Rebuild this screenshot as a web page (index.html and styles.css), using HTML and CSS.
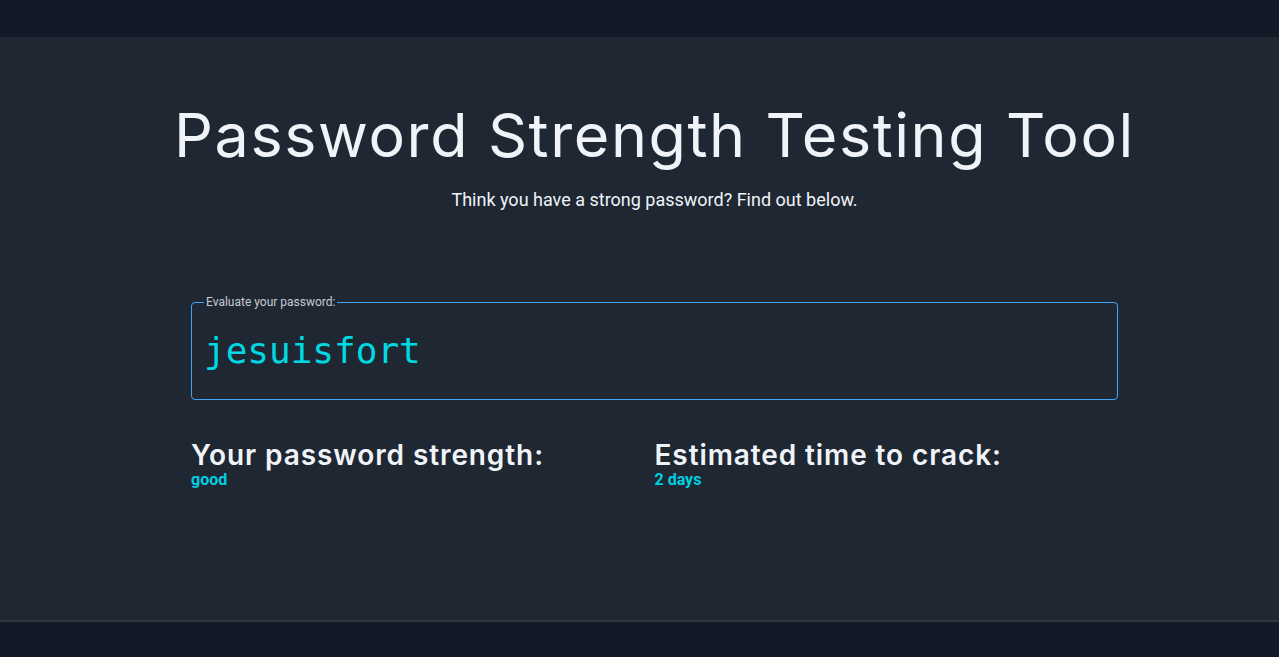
FILE: index.html
```html
<!DOCTYPE html>
<html lang="en">
<head>
<meta charset="utf-8">
<title>Password Strength Testing Tool</title>
<link rel="stylesheet" href="styles.css">
</head>
<body>
<header class="topbar"></header>
<main class="main">
  <div class="container">
    <h1 class="title">Password Strength Testing Tool</h1>
    <p class="subtitle">Think you have a strong password? Find out below.</p>
    <fieldset class="field">
      <legend class="field-label">Evaluate your password:</legend>
      <input class="field-input" type="text" value="jesuisfort" spellcheck="false">
    </fieldset>
    <div class="results">
      <div class="result">
        <h2 class="result-title">Your password strength:</h2>
        <div class="result-value">good</div>
      </div>
      <div class="result">
        <h2 class="result-title">Estimated time to crack:</h2>
        <div class="result-value">2 days</div>
      </div>
    </div>
  </div>
</main>
<footer class="footer"></footer>
</body>
</html>
```
FILE: styles.css
```css
* { box-sizing: border-box; }
html, body { margin: 0; padding: 0; }
body {
  background: #111a26;
  font-family: Roboto, "Liberation Sans", sans-serif;
  color: #f0f4f8;
  height: 657px;
  overflow: hidden;
}
.topbar {
  height: 37px;
  background: #111a26;
}
.main {
  background: #1f2733;
  height: 583px;
  padding-left: 30px;
  padding-top: 56px;
}
.container {
  width: 927px;
  margin: 0 auto;
}
.title {
  margin: 0 -100px;
  text-align: center;
  font-family: Inter, "Open Sans", sans-serif;
  font-weight: 400;
  font-size: 61px;
  line-height: 84px;
  letter-spacing: 1.6px;
  color: #f0f4f8;
  white-space: nowrap;
}
.subtitle {
  margin: 12px 0 0;
  text-align: center;
  font-size: 18px;
  line-height: 22px;
  color: #f0f4f8;
}
.field {
  margin: 84px 0 0;
  padding: 0 12px;
  border: 1px solid #42a5f5;
  border-radius: 4px;
  height: 105px;
}
.field-label {
  padding: 0 2px;
  margin-left: 0;
  font-size: 12px;
  line-height: 14px;
  color: #c6cbd2;
}
.field-input {
  display: block;
  width: 100%;
  margin-top: 17px;
  background: transparent;
  border: none;
  outline: none;
  padding: 0;
  font-family: "DejaVu Sans Mono", "Liberation Mono", monospace;
  font-size: 36px;
  line-height: 50px;
  height: 50px;
  color: #00d9e3;
}
.results {
  display: grid;
  grid-template-columns: 1fr 1fr;
  margin-top: 39px;
}
.result-title {
  margin: 0;
  font-family: Inter, "Open Sans", sans-serif;
  font-weight: 600;
  font-size: 28px;
  line-height: 32px;
  letter-spacing: 0.9px;
  color: #f0f4f8;
}
.result-value {
  font-size: 16px;
  font-weight: 700;
  line-height: 18px;
  color: #00d0e0;
}
.footer {
  height: 37px;
  border-top: 2px solid #2e3742;
  background: #111a26;
}
```
